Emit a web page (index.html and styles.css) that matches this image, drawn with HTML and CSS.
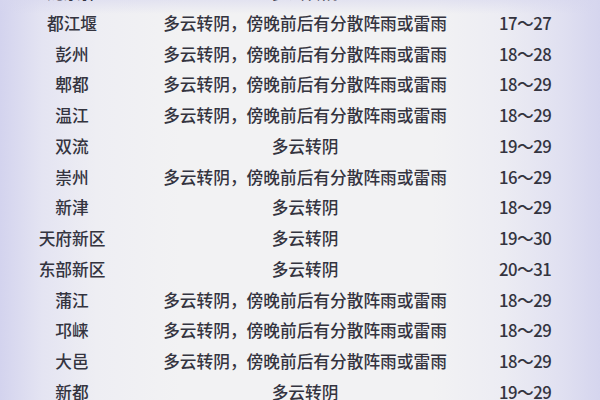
FILE: index.html
```html
<!DOCTYPE html>
<html lang="zh">
<head>
<meta charset="utf-8">
<link rel="stylesheet" href="styles.css">
</head>
<body>
<div class="page">
  <div class="table">
    <div class="row"><span class="name">龙泉驿</span><span class="wx">多云转阴</span><span class="temp">19～29</span></div>
    <div class="row"><span class="name">都江堰</span><span class="wx">多云转阴，傍晚前后有分散阵雨或雷雨</span><span class="temp">17～27</span></div>
    <div class="row"><span class="name">彭州</span><span class="wx">多云转阴，傍晚前后有分散阵雨或雷雨</span><span class="temp">18～28</span></div>
    <div class="row"><span class="name">郫都</span><span class="wx">多云转阴，傍晚前后有分散阵雨或雷雨</span><span class="temp">18～29</span></div>
    <div class="row"><span class="name">温江</span><span class="wx">多云转阴，傍晚前后有分散阵雨或雷雨</span><span class="temp">18～29</span></div>
    <div class="row"><span class="name">双流</span><span class="wx">多云转阴</span><span class="temp">19～29</span></div>
    <div class="row"><span class="name">崇州</span><span class="wx">多云转阴，傍晚前后有分散阵雨或雷雨</span><span class="temp">16～29</span></div>
    <div class="row"><span class="name">新津</span><span class="wx">多云转阴</span><span class="temp">18～29</span></div>
    <div class="row"><span class="name">天府新区</span><span class="wx">多云转阴</span><span class="temp">19～30</span></div>
    <div class="row"><span class="name">东部新区</span><span class="wx">多云转阴</span><span class="temp">20～31</span></div>
    <div class="row"><span class="name">蒲江</span><span class="wx">多云转阴，傍晚前后有分散阵雨或雷雨</span><span class="temp">18～29</span></div>
    <div class="row"><span class="name">邛崃</span><span class="wx">多云转阴，傍晚前后有分散阵雨或雷雨</span><span class="temp">18～29</span></div>
    <div class="row"><span class="name">大邑</span><span class="wx">多云转阴，傍晚前后有分散阵雨或雷雨</span><span class="temp">18～29</span></div>
    <div class="row"><span class="name">新都</span><span class="wx">多云转阴</span><span class="temp">19～29</span></div>
  </div>
</div>
</body>
</html>
```

FILE: styles.css
```css
html, body {
  margin: 0;
  padding: 0;
  width: 600px;
  height: 400px;
  overflow: hidden;
}
.page {
  width: 600px;
  height: 400px;
  overflow: hidden;
  background:
    linear-gradient(to bottom, rgba(214,214,238,0.55) 0px, rgba(214,214,238,0) 14px),
    linear-gradient(to right, #d3d3ee 0%, #e4e4f2 7%, #eeeef3 16%, #f2f2f3 30%, #f2f2f3 72%, #ececf3 84%, #e1e1f1 93%, #d5d5ee 100%);
  font-family: "Noto Sans CJK SC", "Noto Sans", sans-serif;
  color: #34343f;
  font-size: 16.7px;
  font-weight: 500;
}
.table {
  margin-top: -23px;
  display: flex;
  flex-direction: column;
}
.row {
  display: grid;
  grid-template-columns: 144px 322px 1fr;
  height: 30.75px;
  align-items: center;
  line-height: 1;
}
.name, .wx {
  text-align: center;
}
.temp {
  padding-left: 33px;
  letter-spacing: -0.5px;
}
```
